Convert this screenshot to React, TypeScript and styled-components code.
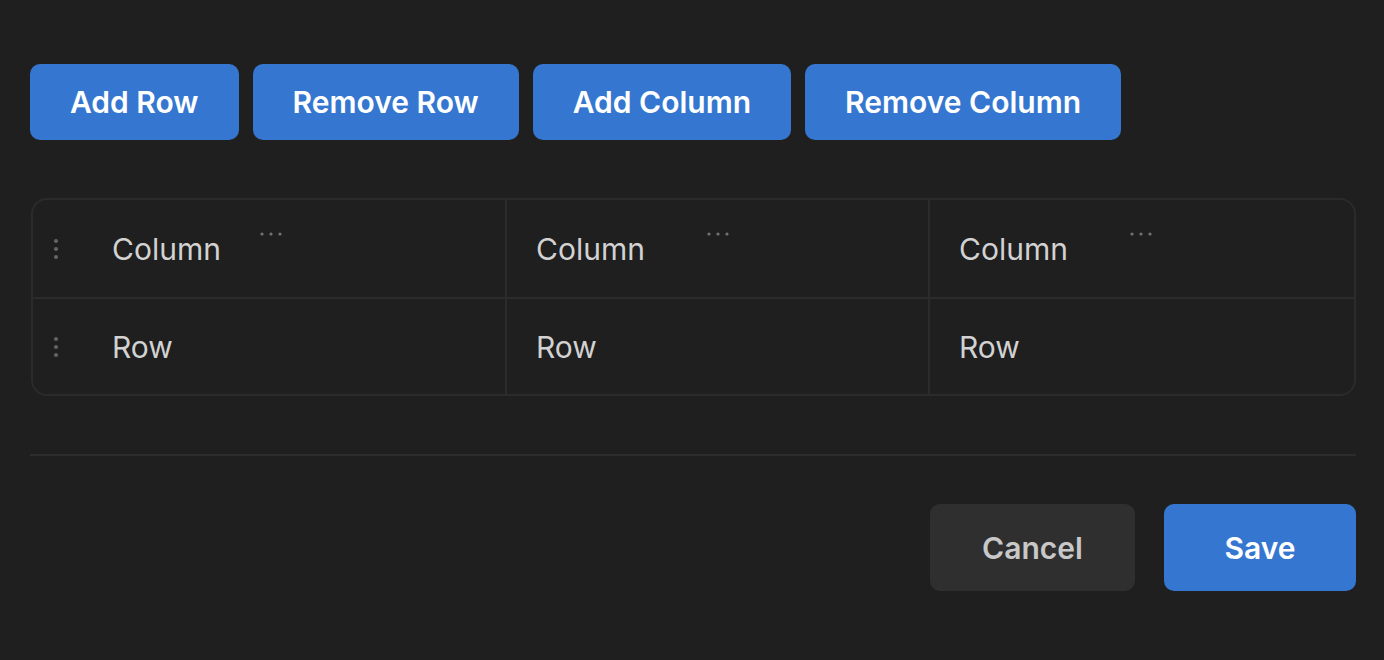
import styled, { createGlobalStyle } from 'styled-components'

const GlobalStyle = createGlobalStyle`
  html, body {
    margin: 0;
    background: #1f1f1f;
  }
  body {
    font-family: Inter, "Noto Sans", "Liberation Sans", sans-serif;
  }
`

type Cell = { text: string; dotsAt?: number }

const header: Cell[] = [
  { text: 'Column', dotsAt: 147 },
  { text: 'Column', dotsAt: 170 },
  { text: 'Column', dotsAt: 170 },
]
const rows: Cell[][] = [[{ text: 'Row' }, { text: 'Row' }, { text: 'Row' }]]

const toolbar = ['Add Row', 'Remove Row', 'Add Column', 'Remove Column']

export default function App() {
  return (
    <Page>
      <GlobalStyle />
      <Toolbar>
        {toolbar.map((label) => (
          <ActionButton key={label}>{label}</ActionButton>
        ))}
      </Toolbar>

      <Table>
        <TableRow $header>
          {header.map((c, i) => (
            <TableCell key={i} $first={i === 0}>
              {i === 0 && <Handle />}
              <CellText>
                {c.text}
                {c.dotsAt !== undefined && (
                  <MenuDots style={{ left: c.dotsAt }} />
                )}
              </CellText>
            </TableCell>
          ))}
        </TableRow>
        {rows.map((r, ri) => (
          <TableRow key={ri}>
            {r.map((c, i) => (
              <TableCell key={i} $first={i === 0}>
                {i === 0 && <Handle />}
                <CellText>{c.text}</CellText>
              </TableCell>
            ))}
          </TableRow>
        ))}
      </Table>

      <Divider />

      <Footer>
        <CancelButton>Cancel</CancelButton>
        <SaveButton>Save</SaveButton>
      </Footer>
    </Page>
  )
}

const Handle = () => (
  <HandleBox>
    <svg width="6" height="22" viewBox="0 0 6 22">
      <circle cx="3" cy="3" r="2" fill="#666" />
      <circle cx="3" cy="11" r="2" fill="#666" />
      <circle cx="3" cy="19" r="2" fill="#666" />
    </svg>
  </HandleBox>
)

const MenuDots = ({ style }: { style?: React.CSSProperties }) => (
  <DotsBox style={style}>
    <svg width="24" height="6" viewBox="0 0 24 6">
      <circle cx="3" cy="3" r="1.6" fill="#737373" />
      <circle cx="12" cy="3" r="1.6" fill="#737373" />
      <circle cx="21" cy="3" r="1.6" fill="#737373" />
    </svg>
  </DotsBox>
)

const Page = styled.div`
  padding: 64px 28px 0 30px;
  height: 660px;
  box-sizing: border-box;
`

const Toolbar = styled.div`
  display: flex;
  gap: 14px;
`

const BaseButton = styled.button`
  border: none;
  font-family: inherit;
  font-weight: 600;
  font-size: 30px;
  cursor: pointer;
  border-radius: 10px;
`

const ActionButton = styled(BaseButton)`
  height: 76px;
  padding: 0 40px;
  background: #3577d0;
  color: #ffffff;
`

const Table = styled.div`
  margin-top: 58px;
  margin-left: 1px;
  border: 2px solid #2b2b2b;
  border-radius: 16px;
  overflow: hidden;
`

const TableRow = styled.div<{ $header?: boolean }>`
  display: grid;
  grid-template-columns: 472px 423px 1fr;
  height: ${({ $header }) => ($header ? '97px' : '95px')};

  & + & {
    border-top: 2px solid #2b2b2b;
  }
`

const TableCell = styled.div<{ $first?: boolean }>`
  position: relative;
  display: flex;
  align-items: center;
  padding-left: ${({ $first }) => ($first ? '79px' : '29px')};
  & + & {
    border-left: 2px solid #2b2b2b;
  }
`

const HandleBox = styled.div`
  position: absolute;
  left: 20px;
  top: 50%;
  transform: translateY(-50%);
  display: flex;
`

const CellText = styled.span`
  position: relative;
  font-size: 30px;
  line-height: 36px;
  color: #d2d2d2;
`

const DotsBox = styled.div`
  position: absolute;
  top: 0;
  display: flex;
`

const Divider = styled.div`
  margin-top: 58px;
  height: 2px;
  background: #2c2c2c;
`

const Footer = styled.div`
  display: flex;
  justify-content: flex-end;
  gap: 29px;
  margin-top: 48px;
`

const CancelButton = styled(BaseButton)`
  width: 205px;
  height: 87px;
  background: #2f2f2f;
  color: #c8c8c8;
`

const SaveButton = styled(BaseButton)`
  width: 192px;
  height: 87px;
  background: #3577d0;
  color: #ffffff;
`
